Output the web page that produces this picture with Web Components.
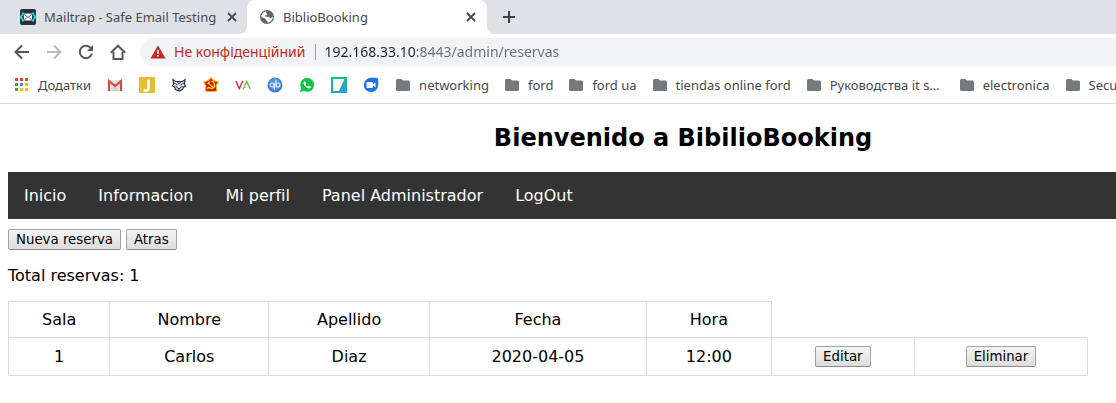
<!DOCTYPE html>
<html lang="es">
<head>
<meta charset="utf-8">
<title>BiblioBooking</title>
<style>
  body { margin: 0; background: #fff; overflow-x: hidden; }
</style>
</head>
<body>
<browser-window>
  <tab-strip slot="tabs">
    <browser-tab><app-icon name="mailtrap"></app-icon><span slot="title">Mailtrap - Safe Email Testing</span></browser-tab>
    <browser-tab active><app-icon name="globe"></app-icon><span slot="title">BiblioBooking</span></browser-tab>
  </tab-strip>
  <tool-bar slot="toolbar"></tool-bar>
  <bookmarks-bar slot="bookmarks">
    <book-mark label="Додатки" icon="apps">Додатки</book-mark>
    <book-mark label="Gmail" icon="gmail"></book-mark>
    <book-mark label="J" icon="jay"></book-mark>
    <book-mark label="Fox" icon="fox"></book-mark>
    <book-mark label="Star" icon="star"></book-mark>
    <book-mark label="VA" icon="va"></book-mark>
    <book-mark label="qBittorrent" icon="qb"></book-mark>
    <book-mark label="WhatsApp" icon="whatsapp"></book-mark>
    <book-mark label="Slant" icon="slant"></book-mark>
    <book-mark label="Duo" icon="duo"></book-mark>
    <book-mark label="networking" icon="folder">networking</book-mark>
    <book-mark label="ford" icon="folder">ford</book-mark>
    <book-mark label="ford ua" icon="folder">ford ua</book-mark>
    <book-mark label="tiendas online ford" icon="folder">tiendas online ford</book-mark>
    <book-mark label="Руководства it s..." icon="folder" wide>Руководства it s…</book-mark>
    <book-mark label="electronica" icon="folder">electronica</book-mark>
    <book-mark label="Secu" icon="folder">Secu</book-mark>
  </bookmarks-bar>
  <booking-page></booking-page>
</browser-window>

<script>
const define = (name, html, setup) => {
  const template = document.createElement('template');
  template.innerHTML = html;
  customElements.define(name, class extends HTMLElement {
    constructor() {
      super();
      this.attachShadow({ mode: 'open' }).append(template.content.cloneNode(true));
    }
    connectedCallback() { if (setup) setup(this, this.shadowRoot); }
  });
};

const icons = {
  mailtrap: `<rect width="16" height="16" rx="2" fill="#24303c"/><path d="M3.5 3.5 1 8l2.500 4.500M12.500 3.500 15 8l-2.500 4.500" fill="none" stroke="#18d5d8" stroke-width="2"/><rect x="4" y="4.500" width="8" height="7" rx="1" fill="#fff"/><path d="m4.500 5.500 3.500 3 3.500-3M4.500 11l2.300-2.500M11.500 11 9.200 8.500" fill="none" stroke="#24303c" stroke-width=".8"/>`,
  globe: `<circle cx="8" cy="8" r="7" fill="#5f6368"/><path d="M8.800 2.200c-2 .2-2.200 1.800-1 2.200 1.200.5.200 1.800-1.300 1.900-.7.100-.4 1.300.5 1.400 1.600.1 3.200-.4 3.700.9.300 1 1.600.8 1.900-.2.300-.8 1-.8 1.300-.4-.4 3-2.600 5.500-5.400 5.800.2-1 .1-1.800-.8-2.100-1-.4-.7-1.700-1.800-2.100L2.400 8C2 4.800 5 1.800 8.800 2.200z" fill="#fff"/>`,
  apps: `<path fill="#ea4335" d="M1 1h3v3H1zM6 1h3v3H6zM11 1h3v3h-3z"/><path fill="#34a853" d="M1 6h3v3H1zM1 11h3v3H1z"/><path fill="#4285f4" d="M6 6h3v3H6z"/><path fill="#fbbc05" d="M11 6h3v3h-3zM6 11h3v3H6zM11 11h3v3h-3z"/>`,
  gmail: `<rect x="1" y="3" width="14" height="11" rx="1" fill="#e6e6e6"/><path d="M3 14 8 9l5 5z" fill="#d2d2d2"/><path d="M2 14V4l6 5 6-5v10" fill="none" stroke="#d54b3d" stroke-width="2.200"/>`,
  jay: `<path fill="#e4bd32" d="M0 0h16v16H0z"/><path d="M9.500 2.500v8.500q0 2.500-2.500 2.500H4.500" fill="none" stroke="#fff" stroke-width="2.500"/>`,
  fox: `<path d="M2 2.500 4.500 4.500h7L14 2.500l-.5 5 1 1.500-2 1-1 2.500L8 14l-3.500-1.500-1-2.500-2-1 1-1.500z" fill="#dce4ed" stroke="#27354a" stroke-width="1.200"/><path d="m3 6 3.500 2M13 6 9.500 8M4.500 9.500 7 10.500M11.500 9.500 9 10.500M6 4.500l2 2.500 2-2.500" stroke="#27354a" fill="none"/><path d="M6.500 11h3L8 13.500z" fill="#27354a"/>`,
  star: `<path d="m8 .8 2.700 2.700 4.500 1.500-2 3.500.5 5.500L8 14.500 2.300 14l.5-5.500-2-3.500 4.500-1.500z" fill="#d20d0d" stroke="#e9b51c" stroke-width="1.200"/><path d="M8.500 4c3.500 1 4 5.500 1.500 7-1.500.9-3 .3-4-.7M5 6l6 5M4.500 7 7 4.500M6 10l-2 2" stroke="#ffd733" stroke-width="1.500" fill="none"/>`,
  va: `<path d="m.8 4 3.500 7.500L7.800 4" fill="none" stroke="#e12c43" stroke-width="1.500"/><path d="m8.200 12 3.500-7.500 3.500 7.500" fill="none" stroke="#6cbf4b" stroke-width="1.500"/>`,
  qb: `<circle cx="8" cy="8" r="7.500" fill="#3f7fcb"/><circle cx="8" cy="7" r="6" fill="#5793d7"/><g fill="none" stroke="#d8e9fb" stroke-width="1.200"><circle cx="5.200" cy="8" r="2"/><path d="M7.300 5.700v7M9 3v7.200"/><circle cx="11" cy="8" r="2"/></g>`,
  whatsapp: `<path d="M1 15l1-4A6.900 6.900 0 1 1 5 14z" fill="#0fc443"/><path d="M5.700 4.300c-1.400.5-1.500 2.300-.3 3.900 1.400 2 3.700 3.600 5.300 3.100 1-.3 1.300-1.200 1.100-1.700l-1.900-1-1 .9C7.700 9 7 8.300 6.500 7.200l.7-.9z" fill="#fff"/>`,
  slant: `<defs><linearGradient id="g" x2="1" y2="1"><stop stop-color="#08cf5d"/><stop offset="1" stop-color="#3198e4"/></linearGradient></defs><path fill="url(#g)" d="M0 0h16v16H0z"/><path d="M2 2h11.500L8 14H2z" fill="#fff"/>`,
  duo: `<path d="M8 .8h5.200q2 0 2 2V8A7.200 7.200 0 1 1 8 .8z" fill="#1a73e8"/><rect x="3.500" y="5" width="6.500" height="6" rx="1" fill="#fff"/><path d="m10 7.500 2.500-2v5L10 8.500z" fill="#fff"/>`,
  folder: `<path d="M1 3.500Q1 2 2.500 2h4L8 3.500h5.500Q15 3.500 15 5v7.500q0 1.500-1.500 1.500h-11Q1 14 1 12.500z" fill="#757a7e"/>`,
  warning: `<path d="M8 1.500 15.500 14.500H.5z" fill="#c5291f"/><path d="M7.200 6h1.600v4H7.200zM7.200 11h1.600v1.600H7.200z" fill="#fff"/>`,
  back: `<path d="M15 8H2M8 1.500 1.500 8 8 14.500" fill="none" stroke="#54585d" stroke-width="2"/>`,
  forward: `<path d="M1 8h13M8 1.500 14.500 8 8 14.500" fill="none" stroke="#b9bbbe" stroke-width="2"/>`,
  reload: `<path d="M13.200 4.500A6.200 6.200 0 1 0 14 9.500" fill="none" stroke="#54585d" stroke-width="2"/><path d="M15 1v6H9z" fill="#54585d"/>`,
  home: `<path d="M3.500 8v7h9V8M.8 8.800 8 1.700l7.200 7.100" fill="none" stroke="#54585d" stroke-width="2"/>`,
  close: `<path d="m4 4 8 8M12 4l-8 8" stroke="#45494d" stroke-width="1.800"/>`,
  plus: `<path d="M8 2v12M2 8h12" stroke="#3c4043" stroke-width="2"/>`
};

define('app-icon', `
  <style>:host { display: block; width: 16px; height: 16px; flex: none; } svg { display: block; width: 100%; height: 100%; }</style>
  <svg viewBox="0 0 16 16" aria-hidden="true"></svg>`,
  (host, root) => { root.querySelector('svg').innerHTML = icons[host.getAttribute('name')]; });

define('browser-window', `
  <style>:host { display: block; }
    header { font-family: "Noto Sans", sans-serif; border-bottom: 1px solid #d9dbdd; }
  </style>
  <header><slot name="tabs"></slot><slot name="toolbar"></slot><slot name="bookmarks"></slot></header>
  <main><slot></slot></main>`);

define('tab-strip', `
  <style>
    :host { display: flex; align-items: center; height: 34px; padding-left: 8px; background: #dee1e6; }
    button { display: flex; border: 0; padding: 6px; margin-left: 8px; background: none; }
  </style>
  <slot></slot><button aria-label="New tab"><app-icon name="plus"></app-icon></button>`);

define('browser-tab', `
  <style>
    :host { display: flex; align-items: center; position: relative; box-sizing: border-box; width: 240px; height: 34px; padding: 0 8px 0 12px; border-radius: 8px 8px 0 0; color: #45494d; }
    :host([active]) { background: #fff; margin-left: -1px; }
    :host([active])::before, :host([active])::after { content: ""; position: absolute; bottom: 0; width: 8px; height: 8px; }
    :host([active])::before { right: 100%; background: radial-gradient(circle at 0 0, transparent 8px, #fff 8px); }
    :host([active])::after { left: 100%; background: radial-gradient(circle at 100% 0, transparent 8px, #fff 8px); }
    .title { flex: 1; padding: 0; margin-left: 8px; border: 0; background: none; text-align: left; white-space: nowrap; color: inherit; font: 13px/18px "Noto Sans", sans-serif; }
    .close { display: flex; padding: 0; border: 0; background: none; }
  </style>
  <slot></slot>
  <button class="title"><slot name="title"></slot></button>
  <button class="close" aria-label="Close tab"><app-icon name="close"></app-icon></button>`);

define('tool-bar', `
  <style>
    :host { display: flex; align-items: center; height: 36px; padding-left: 14px; background: #fff; }
    .nav { display: flex; gap: 16px; margin-right: 14px; }
    .nav button { display: flex; padding: 0; border: 0; background: none; }
    form { flex: 1; display: flex; align-items: center; height: 28px; padding-left: 10px; border-radius: 14px 0 0 14px; background: #f1f3f4; font-size: 14px; }
    label { margin-left: 8px; padding-right: 10px; border-right: 1px solid #9a9da1; line-height: 16px; color: #c5291f; white-space: nowrap; }
    input { flex: 1; min-width: 0; margin-left: 8px; padding: 0; border: 0; font: 14px/20px "Noto Sans", sans-serif; color: transparent;
      background: linear-gradient(to right, #202124 92px, #6a6e73 92px); -webkit-background-clip: text; background-clip: text; }
  </style>
  <div class="nav">
    <button aria-label="Back"><app-icon name="back"></app-icon></button>
    <button aria-label="Forward"><app-icon name="forward"></app-icon></button>
    <button aria-label="Reload"><app-icon name="reload"></app-icon></button>
    <button aria-label="Home"><app-icon name="home"></app-icon></button>
  </div>
  <form><app-icon name="warning"></app-icon><label for="url">Не конфіденційний</label><input id="url" type="text" value="192.168.33.10:8443/admin/reservas"></form>`);

define('bookmarks-bar', `
  <style>:host { display: flex; align-items: center; height: 33px; padding: 0 0 3px 14px; overflow: hidden; background: #fff; gap: 16px; box-sizing: border-box; }</style>
  <slot></slot>`);

define('book-mark', `
  <style>
    :host { display: block; flex: none; }
    :host([icon="folder"]) { margin-right: -1px; }
    :host([wide]) { width: 138px; }
    a { display: flex; align-items: center; gap: 8px; color: #45494d; font-size: 13px; line-height: 18px; white-space: nowrap; text-decoration: none; }
    a.bare { gap: 0; }
  </style>
  <a href="#"><span><slot></slot></span></a>`,
  (host, root) => {
    const link = root.querySelector('a');
    link.setAttribute('aria-label', host.getAttribute('label'));
    link.classList.toggle('bare', !/folder|apps/.test(host.getAttribute('icon')));
    const icon = document.createElement('app-icon');
    icon.setAttribute('name', host.getAttribute('icon'));
    link.prepend(icon);
  });

define('classic-button', `
  <style>
    :host { display: inline-block; vertical-align: top; }
    button { display: block; height: 21px; padding: 0 7px; border: 1px solid #a0a0a0; border-bottom-color: #8a8a8a; border-radius: 2px; background: linear-gradient(#f5f5f5, #dcdcdc); color: #000; font-family: "DejaVu Sans", sans-serif; }
  </style>
  <button><slot></slot></button>`);

define('site-nav', `
  <style>
    :host { display: block; background: #333; }
    ul { display: flex; margin: 0; padding: 0; list-style: none; }
    a { display: block; padding: 14px 16px; color: #fff; text-decoration: none; }
  </style>
  <nav><ul>
    <li><a href="#">Inicio</a></li><li><a href="#">Informacion</a></li><li><a href="#">Mi perfil</a></li><li><a href="#">Panel Administrador</a></li><li><a href="#">LogOut</a></li>
  </ul></nav>`);

define('reservation-table', `
  <style>
    :host { display: block; }
    table { width: 100%; border-collapse: collapse; }
    th, td { padding: 8px; border: 1px solid #ddd; font-weight: normal; text-align: center; }
  </style>
  <table>
    <tr><th scope="col">Sala</th><th scope="col">Nombre</th><th scope="col">Apellido</th><th scope="col">Fecha</th><th scope="col">Hora</th></tr>
    <tr><td>1</td><td>Carlos</td><td>Diaz</td><td>2020-04-05</td><td>12:00</td><td><classic-button>Editar</classic-button></td><td><classic-button>Eliminar</classic-button></td></tr>
  </table>`);

define('booking-page', `
  <style>
    :host { display: block; padding: 20px 0 0 8px; color: #000; font: 16px/19px "DejaVu Sans", sans-serif; }
    h2 { margin: 0 0 20px; padding-left: 242px; font-size: 24px; line-height: 28px; text-align: center; }
    .actions { display: flex; gap: 5px; margin-top: 10px; }
    p { margin: 16px 0; }
    reservation-table { margin-right: 28px; }
  </style>
  <h2>Bienvenido a BibilioBooking</h2>
  <site-nav></site-nav>
  <div class="actions"><classic-button>Nueva reserva</classic-button><classic-button>Atras</classic-button></div>
  <p>Total reservas: 1</p>
  <reservation-table></reservation-table>`);
</script>
</body>
</html>
